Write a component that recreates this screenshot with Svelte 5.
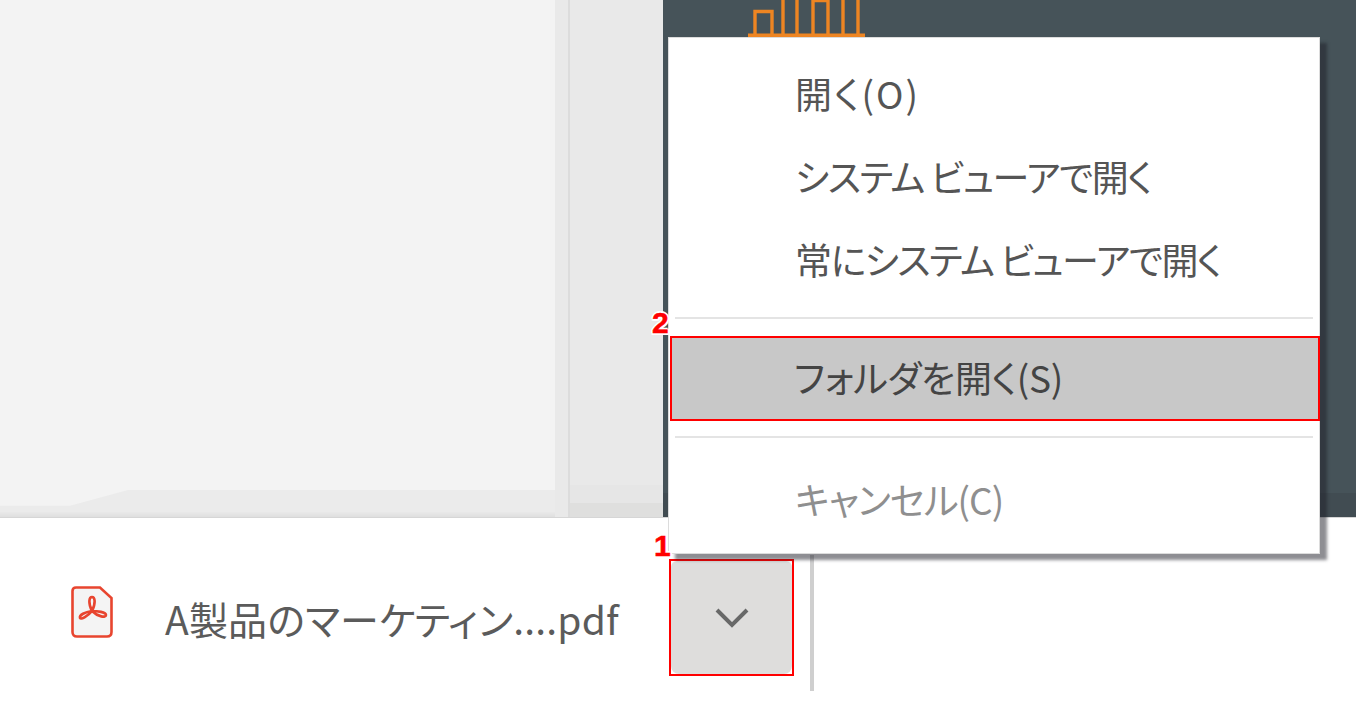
<script>
  const items = [
    { t: '開く(O)', c: 'wide' },
    { t: 'システム ビューアで開く', c: 'tight' },
    { t: '常にシステム ビューアで開く', c: 'tight' }
  ];
</script>

<div class="page">
  <div class="top">
    <div class="left">
      <div class="sheet"></div>
      <div class="fold"></div>
      <div class="foot"></div>
    </div>
    <div class="strip"></div>
    <div class="rule"></div>
    <div class="mid">
      <div class="mid-a"></div>
      <div class="mid-b"></div>
      <div class="mid-c"></div>
    </div>
    <div class="dark">
      <svg class="bars" width="122" height="38" viewBox="0 0 122 38" fill="none" stroke="#ee8522" stroke-width="3.400">
        <path d="M3 35.200H120" />
        <path d="M10 35V11.500H27V35" />
        <path d="M38 35V0M52 35V0M68 35V0.500H83V35M98 35V0M113 35V0" />
      </svg>
      <div class="dark-shade"></div>
    </div>
  </div>

  <div class="bar">
    <svg class="pdf" width="44" height="54" viewBox="0 0 44 54" fill="none">
      <path d="M6 2.500H30L41.500 13V47Q41.500 51.500 37 51.500H7Q2.500 51.500 2.500 47V6Q2.500 2.500 6 2.500Z" fill="#f4f4f4" stroke="#e8452f" stroke-width="2.600" />
      <path d="M22 26C18 18 19 12 22 12C25 12 26 18 22 26ZM22 26C18 31 11 35 10 33C9 30 15 27 22 26ZM22 26C27 26 36 27 36 30C36 33 28 32 22 26Z" stroke="#e8452f" stroke-width="2.600" stroke-linejoin="round" />
    </svg>
    <span class="fname">A製品のマーケティン....pdf</span>
    <div class="chev">
      <div class="chev-fill">
        <svg width="34" height="20" viewBox="0 0 34 20" fill="none" stroke="#686868" stroke-width="4">
          <path d="M2 2L17 17L32 2" />
        </svg>
      </div>
    </div>
    <div class="sep"></div>
  </div>

  <div class="menu">
    {#each items as i}
      <div class="item {i.c}">{i.t}</div>
    {/each}
    <div class="line first"></div>
    <div class="item hl">フォルダを開く(S)</div>
    <div class="line second"></div>
    <div class="item off">キャンセル(C)</div>
  </div>

  <div class="badge b1">1</div>
  <div class="badge b2">2</div>
</div>

<style>
  :global(body) {
    margin: 0;
    background: #fff;
  }
  .page {
    position: relative;
    width: 1356px;
    height: 708px;
    overflow: hidden;
    font-family: "Noto Sans CJK JP", "Noto Sans", sans-serif;
    color: #555;
  }
  .top {
    display: flex;
    height: 518px;
    border-bottom: 1px solid #d6d6d6;
    box-sizing: border-box;
  }
  .left {
    width: 555px;
    display: flex;
    flex-direction: column;
    background: #f3f3f3;
  }
  .sheet {
    flex: 1;
  }
  .fold {
    height: 22px;
    background: #ebebeb;
    clip-path: polygon(128px 0, 100% 0, 100% 100%, 0 100%, 0 72%, 70px 72%);
  }
  .foot {
    height: 5px;
    background: linear-gradient(#e9e9e9, #dfdfdf);
  }
  .strip {
    width: 13px;
    background: #e9e9e9;
  }
  .rule {
    width: 2px;
    background: #dcdcdc;
  }
  .mid {
    width: 93px;
    display: flex;
    flex-direction: column;
  }
  .mid-a {
    flex: 1;
    background: #e9e9e9;
  }
  .mid-b {
    height: 18px;
    background: #e6e6e6;
  }
  .mid-c {
    height: 14px;
    background: #dfdfde;
  }
  .dark {
    flex: 1;
    background: #465359;
    padding-left: 82px;
    display: flex;
    flex-direction: column;
  }
  .bars {
    display: block;
    flex: none;
  }
  .dark-shade {
    margin: auto 0 0 -82px;
    height: 24px;
    background: #414c52;
  }
  .bar {
    display: flex;
    align-items: flex-start;
    height: 190px;
    padding-left: 70px;
    box-sizing: border-box;
  }
  .pdf {
    flex: none;
    margin-top: 67px;
  }
  .fname {
    margin: 76px 0 0 51px;
    width: 455px;
    flex: none;
    font-size: 39px;
    line-height: 48px;
    letter-spacing: 0.2px;
    font-feature-settings: "palt";
    white-space: nowrap;
    color: #5b5b5b;
  }
  .chev {
    width: 125px;
    height: 117px;
    margin: 41px 0 0 49px;
    flex: none;
    box-sizing: border-box;
    border: 2px solid #f00;
  }
  .chev-fill {
    height: 100%;
    background: #dedddc;
    border-radius: 6px 6px 8px 8px;
    display: flex;
    align-items: center;
    justify-content: center;
  }
  .chev-fill svg {
    margin-top: 1px;
  }
  .sep {
    width: 4px;
    height: 136px;
    margin: 37px 0 0 16px;
    background: #cfcfcf;
    flex: none;
  }
  .menu {
    position: absolute;
    left: 668px;
    top: 37px;
    width: 652px;
    height: 517px;
    box-sizing: border-box;
    padding: 18px 2px 0;
    background: #fff;
    border: 1px solid #dcdcdc;
    box-shadow: 7px 6px 3px rgba(30, 30, 40, 0.5);
  }
  .item {
    height: 83px;
    line-height: 74px;
    padding-left: 124px;
    font-size: 37px;
    font-feature-settings: "palt";
    white-space: nowrap;
    color: #555;
  }
  .wide {
    letter-spacing: 2px;
  }
  .tight {
    letter-spacing: -1.500px;
  }
  .line {
    height: 2px;
    margin: 0 4px;
    background: #e4e4e4;
  }
  .first {
    margin-top: 12px;
    margin-bottom: 17px;
  }
  .second {
    margin-top: 15px;
    margin-bottom: 24px;
  }
  .hl {
    height: 85px;
    line-height: 78px;
    margin: 0 -3px 0 -1px;
    box-sizing: border-box;
    background: #c8c8c8;
    border: 2px solid #f00;
    padding-left: 122px;
    letter-spacing: -0.3px;
    color: #444;
  }
  .off {
    color: #8f8f8f;
    letter-spacing: -1px;
  }
  .badge {
    position: absolute;
    font-family: "Liberation Sans", sans-serif;
    font-weight: 700;
    font-size: 30px;
    line-height: 30px;
    color: #f00;
    -webkit-text-stroke: 0.5px #f00;
    text-shadow: 2px 0 #fff, -2px 0 #fff, 0 2px #fff, 0 -2px #fff, 1.500px 1.500px #fff, -1.500px -1.500px #fff, 1.500px -1.500px #fff, -1.500px 1.500px #fff;
  }
  .b1 {
    left: 654px;
    top: 531px;
  }
  .b2 {
    left: 652px;
    top: 308px;
  }
</style>
